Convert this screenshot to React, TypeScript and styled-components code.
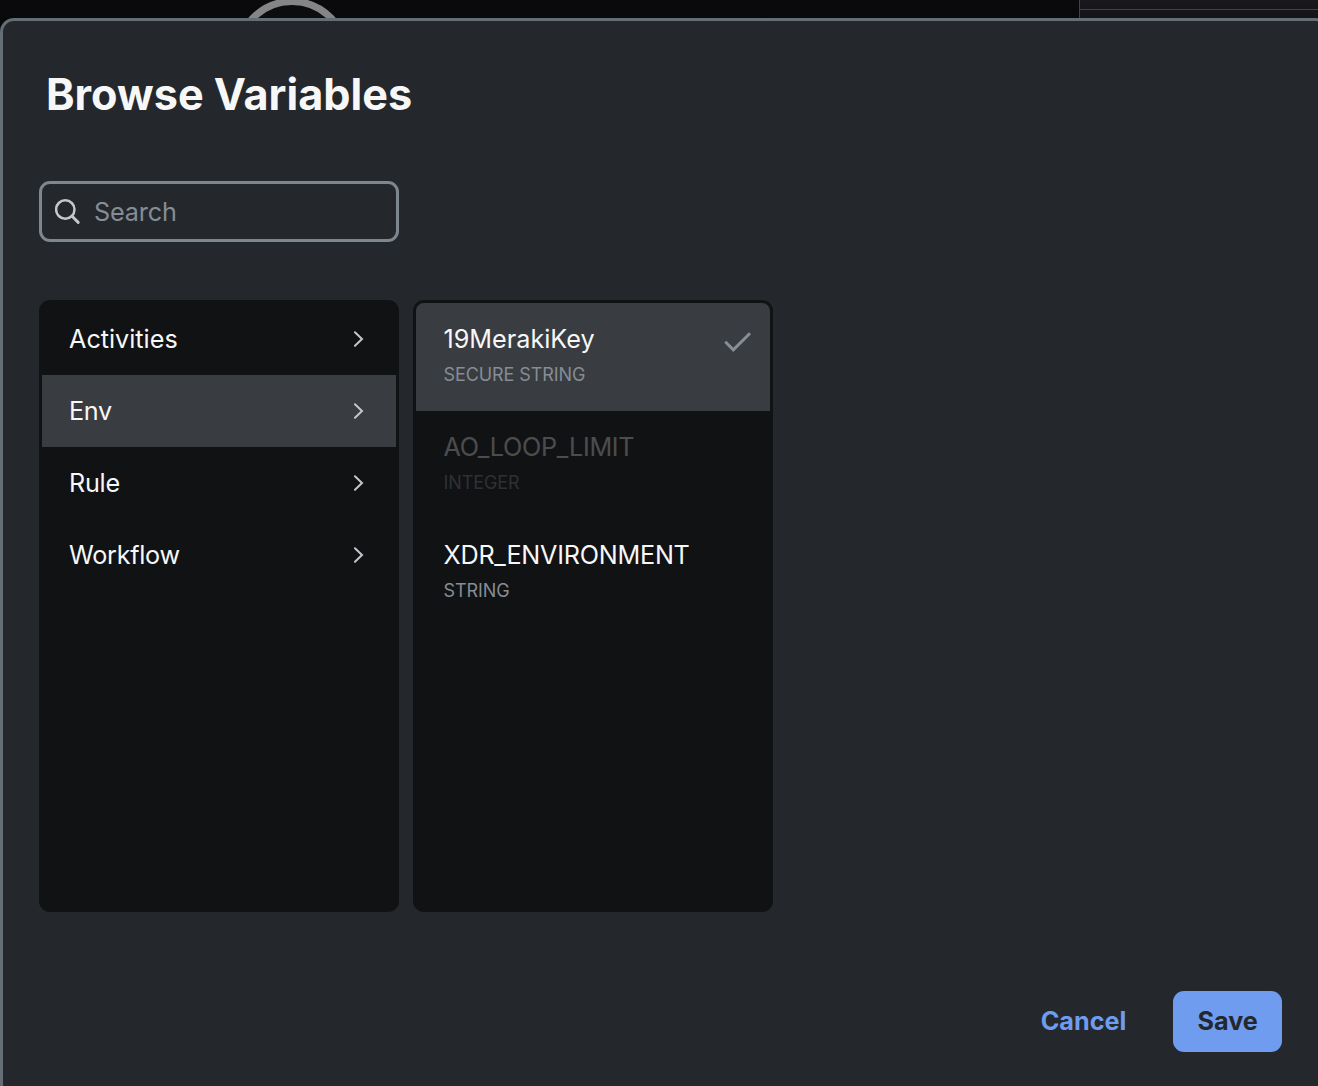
import React from "react";
import styled, { createGlobalStyle } from "styled-components";

const GlobalStyle = createGlobalStyle`
  *, *::before, *::after { box-sizing: border-box; }
  html, body { margin: 0; height: 100%; overflow: hidden; background: #08090b; }
  body { font-family: Inter, "Liberation Sans", sans-serif; }
  button, input { font: inherit; }
`;

const Screen = styled.div`
  height: 1086px;
  width: 100%;
  overflow: hidden;
  background: #08090b;
`;

const Backdrop = styled.div`
  display: flex;
  justify-content: space-between;
  height: 18px;
  padding-left: 234px;
  background: linear-gradient(#0a0a0c, #08090b);
`;

const Canvas = styled.svg`
  display: block;
  width: 116px;
  height: 18px;
`;

const SidePanel = styled.div`
  width: 239px;
  height: 18px;
  border-left: 1px solid #414246;
  background: linear-gradient(#19191d, #141518);
`;

const SidePanelHeader = styled.div`
  height: 10px;
  border-bottom: 1px solid #414246;
`;

const Dialog = styled.section`
  display: flex;
  flex-direction: column;
  width: 1330px;
  height: 1080px;
  padding: 44px 45px 0 36px;
  border: 3px solid #656d75;
  border-radius: 14px;
  background: #24282c;
`;

const Title = styled.h1`
  margin: 0 0 0 7px;
  height: 58px;
  line-height: 58px;
  font-size: 43.2px;
  font-weight: 700;
  color: #f7f7f7;
  white-space: nowrap;
`;

const SearchBox = styled.label`
  display: flex;
  align-items: center;
  gap: 13px;
  width: 360px;
  height: 61px;
  margin-top: 58px;
  padding: 0 13px;
  border: 3px solid #7e868e;
  border-radius: 11px;
`;

const SearchInput = styled.input`
  flex: 1;
  min-width: 0;
  padding: 0;
  border: 0;
  outline: 0;
  background: transparent;
  color: #f7f7f7;
  font-size: 25.2px;
  letter-spacing: -0.15px;
  &::placeholder { color: #858d95; opacity: 1; }
`;

const Columns = styled.div`
  display: flex;
  gap: 14px;
  margin-top: 58px;
`;

const Column = styled.ul`
  width: 360px;
  height: 612px;
  margin: 0;
  padding: 0;
  list-style: none;
  border: 3px solid #111214;
  border-radius: 11px;
  background: #111214;
  overflow: hidden;
`;

const CategoryRow = styled.li<{ $active?: boolean; $tracking: number }>`
  display: flex;
  align-items: center;
  justify-content: space-between;
  height: 72px;
  padding: 0 32px 0 27px;
  background: ${(p) => (p.$active ? "#393c40" : "transparent")};
  color: #f7f7f7;
  font-size: 25.2px;
  letter-spacing: ${(p) => p.$tracking}px;
`;

const VariableRow = styled.li<{ $active?: boolean; $disabled?: boolean }>`
  display: flex;
  justify-content: space-between;
  height: 108px;
  padding: 18px 18px 0 27.5px;
  background: ${(p) => (p.$active ? "#393c40" : "transparent")};
  opacity: ${(p) => (p.$disabled ? 0.25 : 1)};
`;

const VariableText = styled.div`
  display: flex;
  flex-direction: column;
`;

const VariableName = styled.span<{ $tracking: number }>`
  height: 36px;
  line-height: 36px;
  font-size: 25.2px;
  letter-spacing: ${(p) => p.$tracking}px;
  color: #f7f7f7;
`;

const VariableType = styled.span`
  height: 36px;
  line-height: 36px;
  font-size: 18px;
  letter-spacing: -0.08px;
  color: #858d95;
`;

const CheckIcon = styled.svg`
  width: 28px;
  height: 22px;
  margin-top: 10px;
`;

const Footer = styled.footer`
  display: flex;
  align-items: center;
  justify-content: flex-end;
  gap: 22.8px;
  margin-top: 79px;
`;

const Button = styled.button<{ $primary?: boolean }>`
  height: 61px;
  padding: 0 24.2px 1.5px;
  border: 0;
  border-radius: 11px;
  background: ${(p) => (p.$primary ? "#6f9cee" : "transparent")};
  color: ${(p) => (p.$primary ? "#24282c" : "#6f9cee")};
  font-size: 25.2px;
  font-weight: 700;
`;

const Chevron = () => (
  <svg width="10" height="16" viewBox="0 0 10 16" fill="none">
    <path d="M1 1.2L8 8L1 14.8" stroke="#c4c8cd" strokeWidth="2" strokeLinecap="round" />
  </svg>
);

const categories = [
  { name: "Activities", tracking: 0 },
  { name: "Env", tracking: -0.3 },
  { name: "Rule", tracking: -0.25 },
  { name: "Workflow", tracking: -0.28 },
];

const variables = [
  { name: "19MerakiKey", type: "SECURE STRING", tracking: 0, active: true },
  { name: "AO_LOOP_LIMIT", type: "INTEGER", tracking: -0.27, disabled: true },
  { name: "XDR_ENVIRONMENT", type: "STRING", tracking: -0.24 },
];

export default function App() {
  return (
    <>
      <GlobalStyle />
      <Screen>
        <Backdrop>
          <Canvas viewBox="0 0 116 18">
            <circle cx="58" cy="56" r="54.5" fill="#0c0d0f" stroke="#858587" strokeWidth="7" />
          </Canvas>
          <SidePanel>
            <SidePanelHeader />
          </SidePanel>
        </Backdrop>
        <Dialog role="dialog">
          <Title>Browse Variables</Title>
          <SearchBox>
            <svg width="26" height="26" viewBox="0 0 26 26" fill="none">
              <circle cx="10.3" cy="10.5" r="9.2" stroke="#c4c8cd" strokeWidth="2.5" />
              <path d="M17.1 17.3L23.2 23.4" stroke="#c4c8cd" strokeWidth="2.9" strokeLinecap="round" />
            </svg>
            <SearchInput placeholder="Search" />
          </SearchBox>
          <Columns>
            <Column>
              {categories.map((c) => (
                <CategoryRow key={c.name} $active={c.name === "Env"} $tracking={c.tracking}>
                  {c.name}
                  <Chevron />
                </CategoryRow>
              ))}
            </Column>
            <Column>
              {variables.map((v) => (
                <VariableRow key={v.name} $active={v.active} $disabled={v.disabled}>
                  <VariableText>
                    <VariableName $tracking={v.tracking}>{v.name}</VariableName>
                    <VariableType>{v.type}</VariableType>
                  </VariableText>
                  {v.active && (
                    <CheckIcon viewBox="0 0 28 22" fill="none">
                      <path d="M1.3 10.8L9.3 18.8L26 2.2" stroke="#868e97" strokeWidth="3" />
                    </CheckIcon>
                  )}
                </VariableRow>
              ))}
            </Column>
          </Columns>
          <Footer>
            <Button>Cancel</Button>
            <Button $primary>Save</Button>
          </Footer>
        </Dialog>
      </Screen>
    </>
  );
}
